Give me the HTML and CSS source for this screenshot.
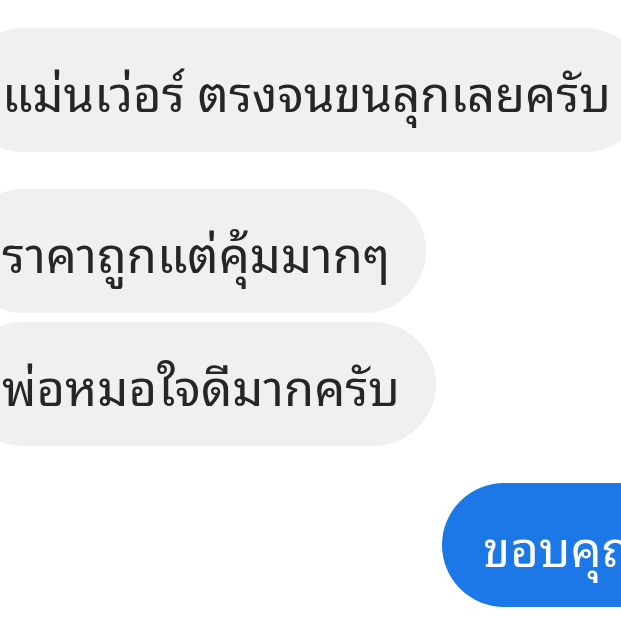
FILE: index.html
```html
<!DOCTYPE html>
<html lang="th">
<head>
<meta charset="UTF-8">
<title>Chat</title>
<link rel="stylesheet" href="styles.css">
</head>
<body>
<div class="thread">
  <div class="row">
    <div class="bubble in">แม่นเว่อร์ ตรงจนขนลุกเลยครับ</div>
  </div>
  <div class="group">
    <div class="row">
      <div class="bubble in">ราคาถูกแต่คุ้มมากๆ</div>
    </div>
    <div class="row">
      <div class="bubble in">พ่อหมอใจดีมากครับ</div>
    </div>
  </div>
  <div class="row out">
    <div class="bubble me">ขอบคุณมากครับ</div>
  </div>
</div>
</body>
</html>
```

FILE: styles.css
```css
html {
	font-family: "Noto Sans Thai Looped", "Noto Sans Thai", "Noto Sans", sans-serif;
	color: #262626;
}
body {
	margin: 0;
	background: #fff;
	overflow: hidden;
	width: 621px;
	height: 621px;
}
.thread {
	display: flex;
	flex-direction: column;
	gap: 37px;
	padding-top: 28px;
	margin-left: -39px;
}
.group {
	display: flex;
	flex-direction: column;
	gap: 9px;
}
.row {
	display: flex;
}
.row.out {
	padding-left: 481px;
}
.bubble {
	white-space: nowrap;
	height: 124px;
	box-sizing: border-box;
	padding: 0 36px 0 41px;
	border-radius: 62px;
	font-size: 49px;
	display: flex;
	align-items: center;
}
.bubble.in {
	background: #f0f0f0;
}
.bubble.me {
	background: #1b78e6;
	color: #fff;
}
```
